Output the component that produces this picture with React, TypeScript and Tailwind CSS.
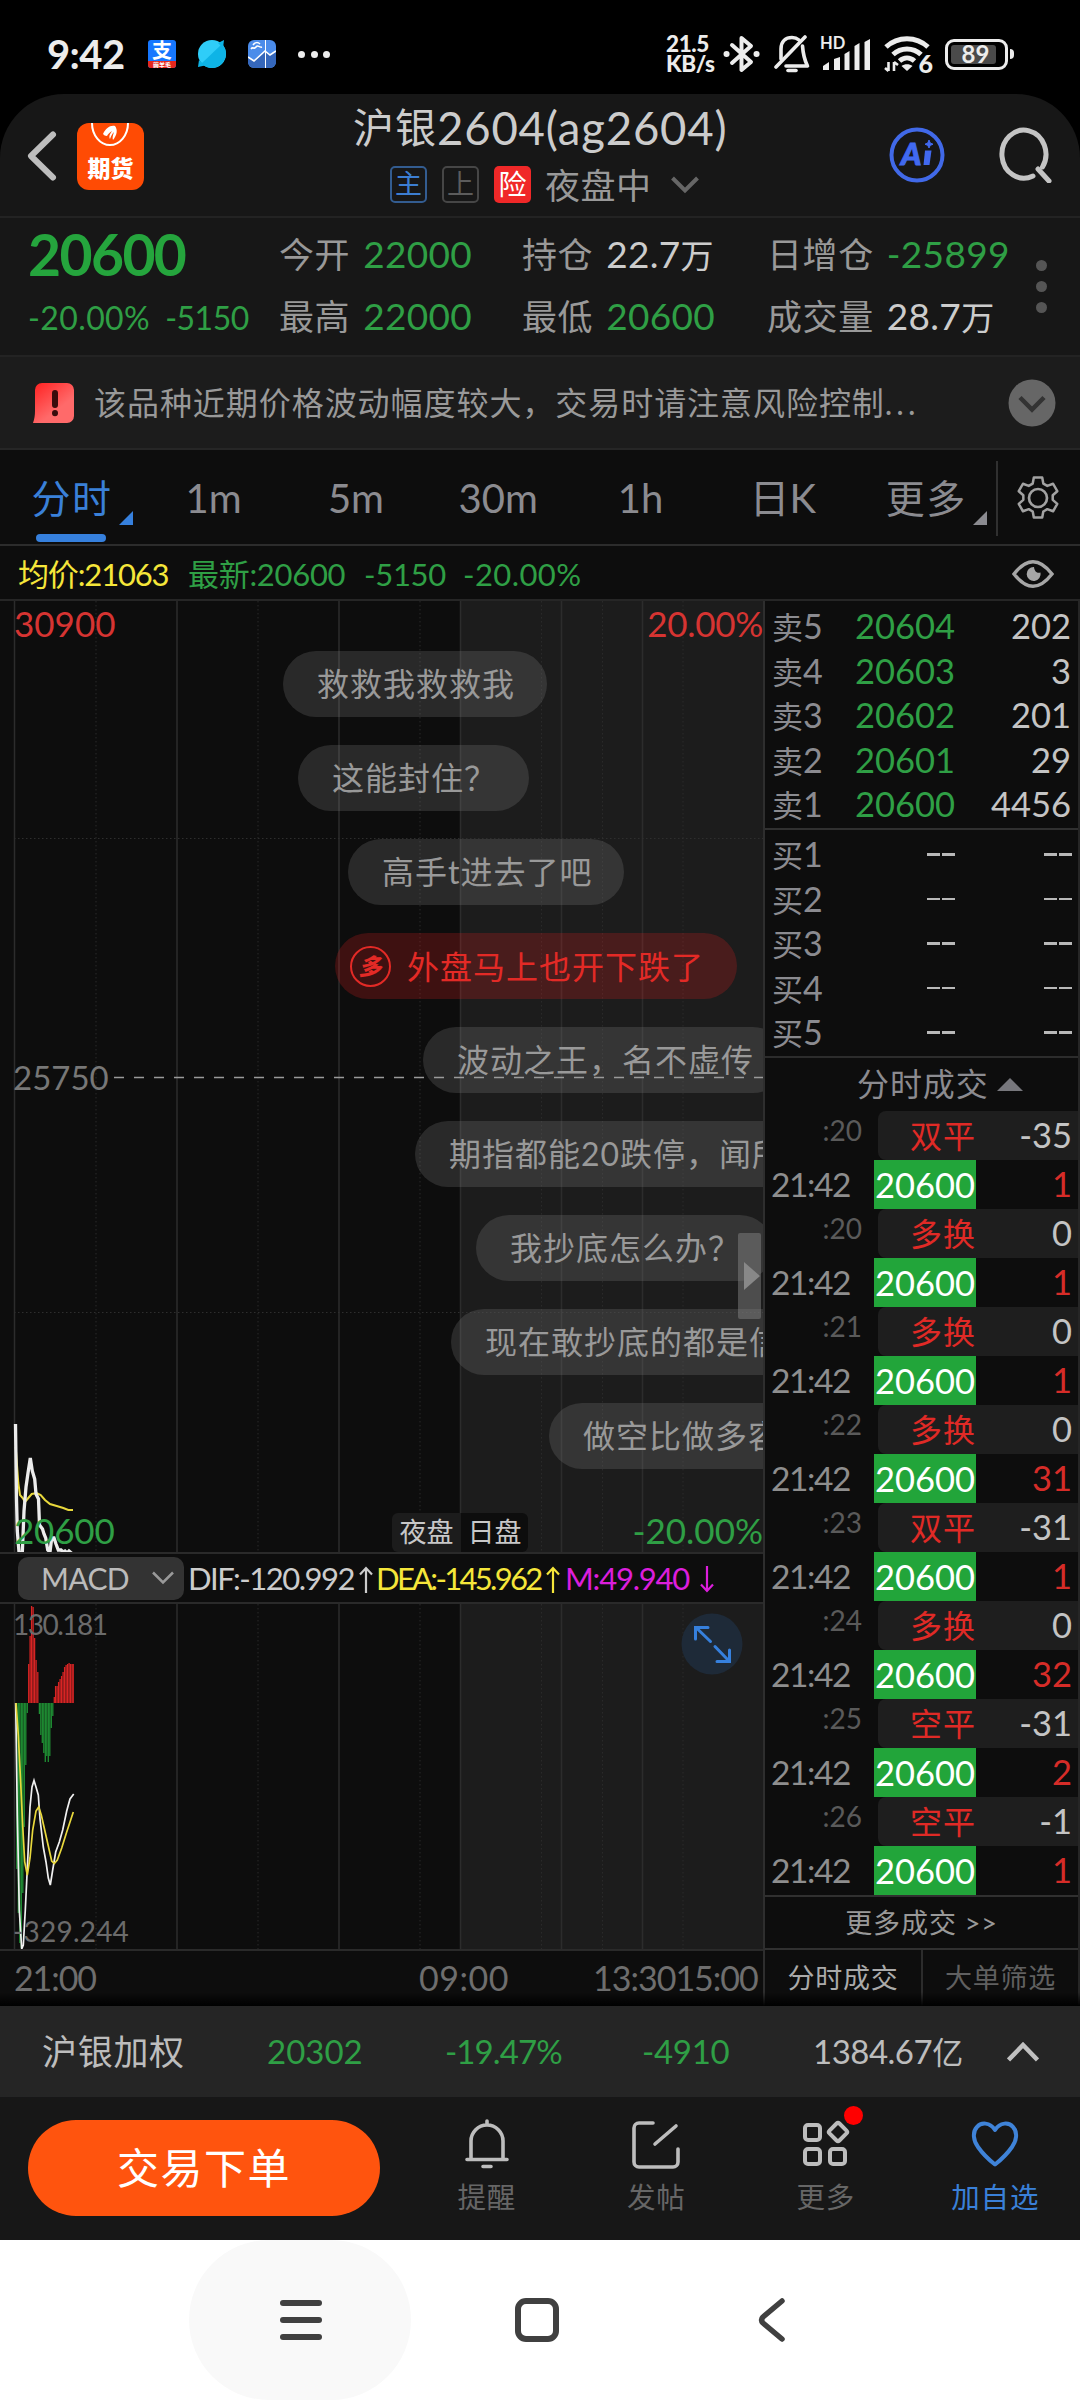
import React from "react";

const FONT = "font-['Lato','Noto_Sans_CJK_SC',sans-serif]";

/* ---------- status bar ---------- */
function StatusBar() {
  return (
    <div className="flex h-[94px] items-center bg-black pt-[14px] pl-[47px] text-[#ececec]">
      <span className="w-[101px] text-[40px] leading-[40px] font-bold tracking-[-0.6px]">9:42</span>
      <div className="flex h-7 w-7 flex-col overflow-hidden rounded-[3px] bg-[#1677ff]">
        <span className="h-[21px] text-center text-[20px] leading-[21px] font-bold text-white">支</span>
        <span className="h-[7px] bg-[#e5261c] text-center text-[6px] leading-[7px] font-bold text-white">薅羊毛</span>
      </div>
      <svg className="ml-[22px]" width="28" height="28" viewBox="0 0 28 28">
        <circle cx="14" cy="14" r="14" fill="#2fcdf8" />
        <path d="M3.5 23.5 24 4A14 14 0 0 1 3.5 23.5Z" fill="#0eb4e6" />
        <path d="M20 3 26 0 25 8ZM1 20 0 27 7 25.500Z" fill="#0eb4e6" />
      </svg>
      <svg className="ml-[22px]" width="28" height="28" viewBox="0 0 28 28">
        <rect width="28" height="28" rx="6" fill="#4b8cea" />
        <path d="M0 17 6 21 17 11 22 15 28 11V22a6 6 0 0 1-6 6H6a6 6 0 0 1-6-6Z" fill="#3567bb" />
        <path d="M0 17 6 21 17 11 22 15 28 11" fill="none" stroke="#fff" strokeWidth="1.600" />
        <path d="M17.500 0V28" stroke="#fff" strokeWidth="1" />
        <path d="M3 9c2-3 3 1 5-2s3 1 6 0M5 5c2-3 5-3 7-1" fill="none" stroke="#fff" strokeWidth="1.500" />
      </svg>
      <div className="ml-[22px] flex gap-[5.500px]">
        <i className="h-[7px] w-[7px] rounded-full bg-[#ececec]" />
        <i className="h-[7px] w-[7px] rounded-full bg-[#ececec]" />
        <i className="h-[7px] w-[7px] rounded-full bg-[#ececec]" />
      </div>
      <div className="ml-[336px] w-[57px] text-[22.500px] leading-[20px] font-black tracking-[-0.400px]">
        <div>21.5</div>
        <div>KB/s</div>
      </div>
      <svg width="38" height="40" viewBox="0 0 38 40" fill="none" stroke="#ececec" strokeWidth="4" strokeLinecap="round" strokeLinejoin="round">
        <path d="M9 11 28 28 18.500 36V4L28 12 9 29" />
        <path d="M3.500 20h.1M33.500 20h.1" strokeWidth="6" />
      </svg>
      <svg className="ml-[13px]" width="36" height="40" viewBox="0 0 36 40" fill="none" stroke="#ececec" strokeWidth="3.600" strokeLinecap="round" strokeLinejoin="round">
        <path d="M2 33 31 3" />
        <path d="M7 25V15C7 7 12 3.500 18 3.500c3 0 5 .8 7 2.500M28.500 12c.6 8 1.500 13 5 20H12" />
        <path d="M14 36.500h8" />
      </svg>
      <svg className="ml-[10px]" width="52" height="40" viewBox="0 0 52 40">
        <text x="0" y="15" fontSize="16.500" fontWeight="700" fill="#ececec">HD</text>
        <path d="M3 36v-4l6-4v8ZM14 36V25l6-2v13ZM24.500 36V20l5-3v19ZM34.500 36V12l5-3v27ZM44.500 36V8l5.500-3v31Z" fill="#ececec" />
      </svg>
      <svg className="ml-[12px]" width="50" height="42" viewBox="0 0 50 42" fill="none" stroke="#ececec" strokeWidth="5">
        <path d="M2 14c12-11 30-11 42 0M9 21.500c8-7.500 20-7.500 28 0" />
        <path d="M15.500 28c4.500-4 10.500-4 15 0" />
        <path d="M17.500 33 23 38l5.500-5c-3-2.500-8-2.500-11 0Z" fill="#ececec" stroke="none" />
        <path d="M4.500 29v9M4.500 38 1 35M10 38v-9M10 29l4 3" strokeWidth="2.600" />
        <text x="34.500" y="40" fontSize="25" fontWeight="900" fill="#ececec" stroke="none">6</text>
      </svg>
      <div className="ml-[11px] flex h-[31px] w-[63px] items-center rounded-[9px] border-[3px] border-[#ececec] p-[3px]">
        <span className="h-[19px] w-[45px] rounded-[3px] bg-[#4a4a4a] pl-[4px] text-center text-[24px] leading-[18px] font-bold">89</span>
      </div>
      <i className="ml-[2px] h-[10px] w-[4px] rounded-r-full bg-[#ececec]" />
    </div>
  );
}

/* ---------- title ---------- */
function Header() {
  return (
    <header className="flex h-[124px] rounded-t-[64px] border-b-2 border-[#232323] bg-[#171717]">
      <svg className="mt-[35px] ml-[26px]" width="32" height="54" viewBox="0 0 32 54" fill="none" stroke="#bdbdbd" strokeWidth="6" strokeLinecap="round" strokeLinejoin="round">
        <path d="M27 5.500 5 27 27 48.500" />
      </svg>
      <div className="relative mt-[29px] ml-[19px] h-[67px] w-[67px] overflow-hidden rounded-[12px] bg-[#ff4b04]">
        <svg className="absolute top-0 left-0" width="67" height="30" viewBox="0 0 67 30">
          <path d="M15 0a18 22 0 0 0 36 0" fill="none" stroke="#fff" strokeWidth="2" />
          <path d="M26 11c3-6 7-9 12-8 3 4 2 9-2 14-1-2 0-5 1-8-2 2-3 4-4 7-1-2-1-4 2-8-2 1-4 3-5 5-2 0-3-1-4-2Z" fill="#fff" />
        </svg>
        <span className="absolute top-[32px] left-[10.500px] text-[23px] leading-[26px] font-black text-white">期货</span>
      </div>
      <div className="ml-[209px] w-[373px]">
        <h1 className="mt-[9px] flex h-[50px] items-center text-[45.500px] leading-[48px] tracking-[0.800px] whitespace-nowrap text-[#cccccc]">
          <span className="text-[41px] tracking-[1px]">沪银</span>2604(ag2604)
        </h1>
        <div className="mt-[13px] ml-[37px] flex items-center">
          <span className="h-[37px] w-[37px] rounded-[5px] border-2 border-[#335c90] text-center text-[27px] leading-[32px] text-[#3c7ed2]">主</span>
          <span className="ml-[15px] h-[37px] w-[37px] rounded-[5px] border-2 border-[#464646] text-center text-[27px] leading-[32px] text-[#5c5c5c]">上</span>
          <span className="ml-[15px] h-[37px] w-[37px] rounded-[5px] bg-[#f02828] text-center text-[28px] leading-[36px] text-white">险</span>
          <span className="ml-[14px] text-[35px] leading-[36px] tracking-[0.500px] text-[#999]">夜盘中</span>
          <svg className="ml-[19px]" width="28" height="18" viewBox="0 0 28 18" fill="none" stroke="#666" strokeWidth="4">
            <path d="M1.500 2 14 14.500 26.500 2" />
          </svg>
        </div>
      </div>
      <svg className="mt-[33px] ml-[163px]" width="56" height="56" viewBox="0 0 56 56">
        <circle cx="28" cy="28" r="25.500" fill="none" stroke="#4169e8" strokeWidth="4" />
        <text x="12" y="38" fontSize="31" fontWeight="900" fontStyle="italic" fill="#4169f0" stroke="#4169f0">A</text>
        <path d="M36 23.500h6.500L40.500 38H34.500Z" fill="#4169f0" />
        <path d="m40 13 1.200 3 2.800 1.200-2.800 1.200L40 21l-1.200-2.600-2.800-1.200 2.800-1.200Z" fill="#4169f0" stroke="#4169f0" />
      </svg>
      <svg className="mt-[33px] ml-[51px]" width="56" height="56" viewBox="0 0 56 56" fill="none" stroke="#c4c4c4" strokeWidth="5" strokeLinecap="round">
        <path d="M37 49A22 24 0 1 1 46.500 40" />
        <path d="M42 42 53 54" />
      </svg>
    </header>
  );
}

function Quote({ label, value, color }: { label: string; value: string; color: string }) {
  return (
    <div className="flex h-[62px] items-center">
      <span className="text-[35px] tracking-[0.600px] text-[#999]">{label}</span>
      <span className={`-mt-[2px] ml-[13px] text-[37px] tracking-[0.300px] ${color}`}>
        {value.replace("万", "")}
        {value.endsWith("万") && <span className="text-[33px] tracking-normal">万</span>}
      </span>
    </div>
  );
}

const GREEN = "text-[#2f9f45]";

function PricePanel() {
  return (
    <section className="flex h-[139px] border-b-2 border-[#232323] bg-[#171717] leading-none whitespace-nowrap">
      <div className="ml-[28px] w-[251px]">
        <div className="mt-[7px] flex h-[58px] items-center text-[57px] font-bold tracking-[-1.600px] text-[#25a53d]">20600</div>
        <div className={`mt-[4px] flex h-[62px] items-center gap-[15px] text-[32px] tracking-[0.400px] ${GREEN}`}>
          <span>-20.00%</span>
          <span className="tracking-[-0.500px]">-5150</span>
        </div>
      </div>
      <div className="mt-[5px] w-[243px]">
        <Quote label="今开" value="22000" color={GREEN} />
        <Quote label="最高" value="22000" color={GREEN} />
      </div>
      <div className="mt-[5px] w-[245px]">
        <Quote label="持仓" value="22.7万" color="text-[#ccc]" />
        <Quote label="最低" value="20600" color={GREEN} />
      </div>
      <div className="mt-[5px] w-[269px]">
        <Quote label="日增仓" value="-25899" color={GREEN} />
        <Quote label="成交量" value="28.7万" color="text-[#ccc]" />
      </div>
      <div className="mt-[42px] flex flex-col gap-[10px]">
        <i className="h-[11px] w-[11px] rounded-full bg-[#555]" />
        <i className="h-[11px] w-[11px] rounded-full bg-[#555]" />
        <i className="h-[11px] w-[11px] rounded-full bg-[#555]" />
      </div>
    </section>
  );
}

function Notice() {
  return (
    <div className="flex h-[93px] items-center border-b-2 border-[#262626] bg-[#1c1c1c]">
      <svg className="ml-[33px]" width="41" height="40" viewBox="0 0 41 40">
        <defs>
          <linearGradient id="warn" x1="0" y1="0" x2="0.800" y2="1">
            <stop offset="0" stopColor="#ff2020" />
            <stop offset="0.700" stopColor="#ff6a6a" />
          </linearGradient>
        </defs>
        <path d="M2 7a7 7 0 0 1 7-7h25a7 7 0 0 1 7 7v26a7 7 0 0 1-7 7H0c1.500-4 2-8 2-12Z" fill="url(#warn)" />
        <path d="M22 10v12M22 30v.2" stroke="#3a0c0c" strokeWidth="6" strokeLinecap="round" />
      </svg>
      <span className="ml-[20px] w-[914px] text-[32px] tracking-[0.950px] whitespace-nowrap text-[#999]">
        该品种近期价格波动幅度较大，交易时请注意风险控制<span className="tracking-[4px]">...</span>
      </span>
      <svg width="48" height="48" viewBox="0 0 48 48">
        <circle cx="24" cy="24" r="23.500" fill="#666" />
        <path d="M12 18.500 24 30.500 36 18.500" fill="none" stroke="#333" strokeWidth="4.500" />
      </svg>
    </div>
  );
}

function Corner({ color }: { color: string }) {
  return (
    <svg className="absolute right-[9px] bottom-[19px]" width="14" height="14" viewBox="0 0 14 14">
      <path d="M14 0V14H0Z" fill={color} />
    </svg>
  );
}

function PeriodTabs() {
  const tabs = ["1m", "5m", "30m", "1h", "日K"];
  return (
    <nav className="flex h-[96px] border-b-2 border-[#2c2c2c] bg-[#0d0d0d] text-[40px] leading-[97px] text-[#8b8b90]">
      <div className="relative w-[142px] pl-[2px] text-center text-[39px] tracking-[1.500px] text-[#3a80d8]">
        分时
        <Corner color="#3680dd" />
        <i className="absolute bottom-[2px] left-[36px] h-[8px] w-[70px] rounded-full bg-[#3680dd]" />
      </div>
      {tabs.map((t) => (
        <div key={t} className="w-[142.300px] pl-[1px] text-center">{t}</div>
      ))}
      <div className="relative w-[142.500px] pl-[3px] text-center text-[39px] tracking-[1.500px]">
        更多
        <Corner color="#8b8b90" />
      </div>
      <i className="mt-[11px] h-[75px] w-[2px] bg-[#303030]" />
      <svg className="mt-[24px] ml-[16px]" width="48" height="48" viewBox="0 0 48 48" fill="none" stroke="#a2a2a2" strokeWidth="2.700" strokeLinejoin="round">
        <path d="M19.500 2.500h9l1.200 6.500 4.300 2.500 6.200-2.300 4.500 8-4.900 4.300v5l4.900 4.300-4.500 8-6.200-2.300-4.300 2.500-1.200 6.500h-9L18.300 39 14 36.500l-6.200 2.300-4.500-8 4.900-4.300v-5l-4.900-4.300 4.500-8L14 11.500 18.300 9Z" transform="translate(1.700 1.200) scale(.93)" />
        <circle cx="24" cy="24" r="9" />
      </svg>
    </nav>
  );
}

function InfoRow() {
  return (
    <div className="flex h-[55px] items-center border-b-2 border-[#262626] bg-[#0d0d0d] pt-[3px] pl-[18px] text-[31px] leading-none whitespace-nowrap text-[#2f9f45]">
      <span className="w-[170px] tracking-[-1.150px] text-[#f5e63a]">均价:21063</span>
      <span className="w-[176px] tracking-[-0.300px]">最新:20600</span>
      <span className="w-[99px] tracking-[-0.300px]">-5150</span>
      <span className="w-[549px] tracking-[0.400px]">-20.00%</span>
      <svg width="42" height="28" viewBox="0 0 42 28">
        <path d="M2 14Q21-10.500 40 14 21 38.500 2 14Z" fill="none" stroke="#a6a6a6" strokeWidth="3.500" />
        <path d="M22 7a7 7 0 1 0 6.500 5.500c-3 1-6-.5-6.500-5.500Z" fill="#a6a6a6" />
      </svg>
    </div>
  );
}

/* ---------- charts ---------- */
type P = [number, number][];
const line = (pts: P) => pts.map(([x, y]) => `${x},${y}`).join(" ");

const price: P = [
  [15.5, 823], [16.500, 898], [17.300, 930], [19, 951], [22.300, 952], [24, 910], [26, 886], [28, 872], [30.300, 857], [32.300, 870],
  [34.700, 878], [36, 893], [38.500, 898], [39.500, 924], [42.500, 928], [44, 933], [45.700, 937], [47.700, 949], [50, 951],
  [51.700, 937], [54, 937], [56, 943], [58.300, 949], [61, 949], [63, 951], [65, 950], [67, 952], [69, 950], [72.500, 953],
];
const average: P = [
  [15.700, 846], [18.300, 882], [20, 894], [22.700, 897], [25, 901], [28.300, 897], [31.700, 893], [36.700, 892], [40.700, 894],
  [45, 899], [50, 903], [56.700, 905], [63.300, 907], [68.300, 909], [73, 909],
];
const dif: P = [
  [15.700, 100], [17.300, 212], [19.300, 307], [21.700, 346], [23.300, 342], [25.300, 307], [28, 251], [30, 204], [32, 184], [34, 177.500],
  [36, 184], [38.300, 192], [40, 216], [43.300, 244], [46, 259], [48.300, 275], [50.300, 282], [52.700, 267], [55.700, 249],
  [59.300, 239], [62.700, 227], [66.700, 208], [70, 196], [73.700, 191],
];
const dea: P = [
  [16, 100], [18.300, 132], [20.700, 180], [22.700, 223], [24.700, 259], [27.300, 272], [30, 255], [32.700, 227], [36, 208], [38.700, 204],
  [41.300, 212], [44.700, 227], [48.300, 243], [51.700, 258], [54.300, 260.500], [57.300, 257], [61.700, 245], [66.700, 229], [73.300, 209],
];
const bars: P = [
  [17, 266], [18.500, 310], [20, 340], [21.500, 345], [23, 290], [24.500, 224], [26, 162], [27.500, 110],
  [28.900, 61], [30.300, 33], [31.800, 3], [33.300, 4], [34.800, 35], [36.300, 57], [38, 69],
  [39.600, 111], [41, 132], [42.500, 140], [44, 150], [45.500, 159], [47, 153], [48.500, 159], [50, 153], [51.500, 125], [53, 113],
  [54.500, 94], [55.800, 83], [57.300, 83], [58.800, 79], [60.300, 76], [61.800, 73], [63.300, 69], [64.800, 64], [66.300, 62], [67.800, 61], [69.300, 60], [70.800, 61], [72.300, 61], [73.400, 61],
];

function VerticalGrid({ height }: { height: number }) {
  return (
    <>
      <rect x="461" width="302" height={height} fill="#1c1c1c" />
      {[96, 258, 420, 541.5, 602.5, 683].map((x) => (
        <line key={x} x1={x} x2={x} y2={height} stroke="#2a2a2a" strokeDasharray="1.500 2.500" />
      ))}
      {[14.5, 177, 339, 460.5, 561.5, 642.5].map((x) => (
        <line key={x} x1={x} x2={x} y2={height} stroke="#2c2c2c" strokeWidth="1.500" />
      ))}
    </>
  );
}

function Pill({ at, text }: { at: string; text: string }) {
  return (
    <div className={`absolute h-[66px] rounded-full bg-[#808080]/25 pr-[32px] pl-[34px] text-[32px] leading-[65px] tracking-[1px] whitespace-nowrap text-[#999] ${at}`}>
      {text}
    </div>
  );
}

function PriceChart() {
  return (
    <div className="relative h-[953px] overflow-hidden border-b-2 border-[#2a2a2a]">
      <svg className="absolute top-0 left-0" width="764" height="953" viewBox="0 0 764 953">
        <VerticalGrid height={953} />
        <path d="M14 237.500H764M14 711.500H764" stroke="#2e2e2e" strokeDasharray="1.500 2.500" />
        <polyline points={line(average)} fill="none" stroke="#e8d83c" strokeWidth="2" />
        <polyline points={line(price)} fill="none" stroke="#ececec" strokeWidth="3.300" />
      </svg>
      <span className="absolute top-[3px] left-[14px] text-[35px] leading-[38px] text-[#d63432]">30900</span>
      <span className="absolute top-[3px] right-0 text-[35px] leading-[38px] tracking-[-0.300px] text-[#d63432]">20.00%</span>
      <span className="absolute top-[457px] left-[13px] text-[33px] leading-[38px] text-[#777]">25750</span>
      <span className="absolute top-[910px] left-[14px] text-[35px] leading-[38px] tracking-[-0.200px] text-[#2f9f45]">20600</span>
      <span className="absolute top-[910px] right-0 text-[35px] leading-[38px] text-[#2f9f45]">-20.00%</span>
      <div className="absolute bottom-0 left-[392px] flex text-[27px] leading-[38px] text-[#c8c8c8]">
        <span className="h-[39px] w-[69px] rounded-l-[6px] bg-[#1c1c1c] text-center">夜盘</span>
        <span className="h-[39px] w-[67px] rounded-r-[6px] bg-[#0d0d0d] text-center">日盘</span>
      </div>
      <Pill at="top-[50px] left-[283px]" text="救救我救救我" />
      <Pill at="top-[144px] left-[298px]" text="这能封住？" />
      <Pill at="top-[238px] left-[348px]" text="高手t进去了吧" />
      <div className="absolute top-[332px] left-[335px] flex h-[66px] w-[402px] items-center rounded-full bg-[#ec2020]/22 pl-[15px] text-[32px] leading-[65px] tracking-[1px] whitespace-nowrap text-[#e32a26]">
        <span className="mr-[16px] flex h-[41px] w-[41px] items-center justify-center rounded-full border-2 border-[#e32a26] text-[23px] font-black italic">多</span>
        外盘马上也开下跌了
      </div>
      <Pill at="top-[426px] left-[423px]" text="波动之王，名不虚传" />
      <Pill at="top-[520px] left-[415px]" text="期指都能20跌停，闻所未闻" />
      <Pill at="top-[614px] left-[476px]" text="我抄底怎么办？" />
      <Pill at="top-[708px] left-[451px]" text="现在敢抄底的都是信仰" />
      <Pill at="top-[802px] left-[549px]" text="做空比做多容易" />
      <svg className="absolute top-[475px] left-[113px]" width="651" height="3" viewBox="0 0 651 3">
        <path d="M1 1.500H651" stroke="#9a9a9a" strokeWidth="1.500" strokeDasharray="10 10" />
      </svg>
      <div className="absolute top-[632px] left-[738px] flex h-[86px] w-[23px] items-center justify-end rounded-[2px] bg-[#8a8a8a]/45">
        <svg width="18" height="30" viewBox="0 0 18 30">
          <path d="M1 1 17 15 1 29Z" fill="#888" />
        </svg>
      </div>
    </div>
  );
}

function Arrow({ color, down }: { color: string; down?: boolean }) {
  return (
    <svg className={down ? "ml-[11px] inline rotate-180 align-[-3px]" : "ml-[5px] inline align-[-3px]"} width="14" height="27" viewBox="0 0 14 27" fill="none" stroke={color} strokeWidth="2.200">
      <path d="M7 27V2M1 8.500 7 2 13 8.500" />
    </svg>
  );
}

function IndicatorRow() {
  return (
    <div className="flex h-[48px] items-center pl-[18px] text-[31px] leading-none whitespace-nowrap">
      <div className="mr-[4px] flex h-[43px] w-[166px] items-center rounded-[10px] bg-[#333] pl-[23px] text-[30px] tracking-[-0.600px] text-[#bbb]">
        <span className="w-[111px]">MACD</span>
        <svg width="22" height="14" viewBox="0 0 22 14" fill="none" stroke="#999" strokeWidth="2.500">
          <path d="M1 1.500 11 11.500 21 1.500" />
        </svg>
      </div>
      <span className="w-[188px] tracking-[-1.500px] text-[#ccc]">DIF:-120.992<Arrow color="#ccc" /></span>
      <span className="w-[189px] tracking-[-2.700px] text-[#f5e63a]">DEA:-145.962<Arrow color="#f5e63a" /></span>
      <span className="tracking-[-1.200px] text-[#dc1edc]">M:49.940<Arrow color="#dc1edc" down /></span>
    </div>
  );
}

function MacdChart() {
  return (
    <div className="relative h-[349px] border-y-2 border-[#2a2a2a]">
      <svg className="absolute top-0 left-0" width="764" height="345" viewBox="0 0 764 345">
        <VerticalGrid height={345} />
        <g transform="translate(0 -1)">
          {bars.map(([x, y]) => (
            <rect
              key={x}
              x={x - 0.85}
              width="1.300"
              y={Math.min(y, 100)}
              height={Math.abs(y - 100)}
              fill={y < 100 ? "#d82424" : "#1f8f34"}
            />
          ))}
          <polyline points={line(dif)} fill="none" stroke="#f0f0f0" strokeWidth="1.700" />
          <polyline points={line(dea)} fill="none" stroke="#e8d83c" strokeWidth="1.700" />
        </g>
      </svg>
      <span className="absolute top-[4px] left-[13px] text-[28px] leading-[32px] tracking-[-1.500px] text-[#6b6b6b]">130.181</span>
      <span className="absolute bottom-[2px] left-[13px] text-[28px] leading-[32px] tracking-[0.200px] text-[#6b6b6b]">-329.244</span>
      <svg className="absolute top-[9px] left-[681px]" width="62" height="62" viewBox="0 0 62 62" fill="none" stroke="#3680dd" strokeWidth="3" strokeLinecap="round">
        <circle cx="31" cy="31" r="30.500" fill="#1e2a38" stroke="none" />
        <path d="M29.500 28.500 15 14.500M14.500 26V14.500H27M34 33.500 48 48M48.500 37V48.500H36" />
      </svg>
    </div>
  );
}

function ChartColumn() {
  return (
    <div className="w-[765px] border-r-2 border-[#2e2e2e]">
      <PriceChart />
      <IndicatorRow />
      <MacdChart />
      <div className="flex h-[54px] items-center pl-[14px] text-[34px] leading-none text-[#6e6e6e]">
        <span className="w-[405px] tracking-[-1.100px]">21:00</span>
        <span className="w-[174px] tracking-[0.500px]">09:00</span>
        <span className="tracking-[-1px]">13:3015:00</span>
      </div>
    </div>
  );
}

/* ---------- order book & trades ---------- */
const sells = [["卖5", "20604", "202"], ["卖4", "20603", "3"], ["卖3", "20602", "201"], ["卖2", "20601", "29"], ["卖1", "20600", "4456"]];
const trades = [
  [":20", "双平", "-35", "1"], [":20", "多换", "0", "1"], [":21", "多换", "0", "1"], [":22", "多换", "0", "31"],
  [":23", "双平", "-31", "1"], [":24", "多换", "0", "32"], [":25", "空平", "-31", "2"], [":26", "空平", "-1", "1"],
];

function Dashes() {
  return (
    <span className="flex justify-end gap-[2px]">
      <i className="h-[2.500px] w-[13px] bg-[#b8b8b8]" />
      <i className="h-[2.500px] w-[13px] bg-[#b8b8b8]" />
    </span>
  );
}

function OrderColumn() {
  return (
    <div className="w-[315px] border-r-2 border-[#262626] leading-none">
      <div className="h-[229px] border-b-2 border-[#303030] pt-[3px]">
        {sells.map(([l, p, n]) => (
          <div key={l} className="flex h-[44.500px] items-center pr-[7px] pl-[7px] text-[34.500px]">
            <span className="w-[60px] text-[31px] text-[#8b8b90]">{l[0]}<span className="text-[34px]">{l[1]}</span></span>
            <span className="w-[123px] text-right text-[#2f9f45]">{p}</span>
            <span className="flex-1 text-right text-[#c4c4c4]">{n}</span>
          </div>
        ))}
      </div>
      <div className="h-[228px] border-b-2 border-[#2c2c2c] pt-[2px]">
        {["1", "2", "3", "4", "5"].map((n) => (
          <div key={n} className="flex h-[44.500px] items-center pr-[6px] pl-[7px]">
            <span className="w-[60px] text-[31px] text-[#8b8b90]">买<span className="text-[34px]">{n}</span></span>
            <span className="w-[123px]"><Dashes /></span>
            <span className="flex-1"><Dashes /></span>
          </div>
        ))}
      </div>
      <div className="flex h-[53px] items-center pl-[92px] text-[32px] tracking-[0.900px] text-[#8b8b90]">
        <span className="-mt-[1px]">分时成交</span>
        <svg className="ml-[8px]" width="26" height="13" viewBox="0 0 28 14">
          <path d="M14 0 28 14H0Z" fill="#77777c" />
        </svg>
      </div>
      {trades.map(([s, kind, delta, n]) => (
        <div key={s + n + kind + delta}>
          <div className="flex h-[49px]">
            <span className="w-[97px] pt-[5px] text-right text-[28px] text-[#5a5a5a]">{s}</span>
            <div className="ml-[16px] flex flex-1 items-center justify-between rounded-l-[8px] bg-[#1e1e1e] pr-[6px] pl-[32px]">
              <span className="text-[32px] tracking-[1px] text-[#e02a26]">{kind}</span>
              <span className="-mt-[1px] text-[34.500px] text-[#c4c4c4]">{delta}</span>
            </div>
          </div>
          <div className="flex h-[49px] items-center pr-[6px] pl-[6px] text-[34.500px]">
            <span className="w-[103px] text-[33.500px] tracking-[-1.400px] text-[#8e8e8e]">21:42</span>
            <span className="h-[49px] w-[102px] bg-[#22a53a] text-center leading-[49px] text-white">20600</span>
            <span className="flex-1 text-right text-[#d62c28]">{n}</span>
          </div>
        </div>
      ))}
      <div className="flex h-[55px] items-center justify-center border-y-2 border-[#303030] text-[27px] tracking-[0.900px] text-[#999]">更多成交 &gt;&gt;</div>
      <div className="flex h-[56px] text-[27px] leading-[55px] tracking-[0.700px]">
        <span className="w-[158px] border-r-2 border-[#2c2c2c] text-center text-[#aaa]">分时成交</span>
        <span className="flex-1 text-center text-[#606060]">大单筛选</span>
      </div>
    </div>
  );
}

/* ---------- bottom ---------- */
function IndexBar() {
  return (
    <div className="flex h-[91px] items-center bg-[#252525] pl-[42px] text-[33px] leading-none whitespace-nowrap text-[#2f9f45]">
      <span className="w-[225px] text-[35px] tracking-[0.700px] text-[#bdbdbd]">沪银加权</span>
      <span className="w-[178px]">20302</span>
      <span className="w-[197px] tracking-[-0.900px]">-19.47%</span>
      <span className="w-[171px] tracking-[-0.300px]">-4910</span>
      <span className="w-[194px] tracking-[-0.500px] text-[#bdbdbd]">1384.67<span className="text-[31px]">亿</span></span>
      <svg width="32" height="20" viewBox="0 0 32 20" fill="none" stroke="#c0c0c0" strokeWidth="4.500">
        <path d="M1.500 18 16 3 30.500 18" />
      </svg>
    </div>
  );
}

function Tool({ label, color, badge, children }: { label: string; color: string; badge?: boolean; children: React.ReactNode }) {
  return (
    <div className={`relative flex w-[169.500px] flex-col items-center ${color}`}>
      <svg className="mt-[19px]" width="56" height="56" viewBox="0 0 56 56" fill="none" strokeWidth="3.600" strokeLinecap="round" strokeLinejoin="round">
        {children}
      </svg>
      {badge && <i className="absolute top-[9px] left-[103px] h-[19px] w-[19px] rounded-full bg-[#f00]" />}
      <span className="mt-[8px] text-[28.500px] leading-[34px] tracking-[0.800px]">{label}</span>
    </div>
  );
}

function Toolbar() {
  return (
    <div className="flex h-[143px] bg-[#171717] pl-[28px]">
      <button className="mt-[23px] mr-[22px] h-[96px] w-[352px] rounded-full bg-[#ff540e] text-[42px] leading-[92px] tracking-[1.500px] text-white">交易下单</button>
      <Tool label="提醒" color="text-[#666]">
        <path d="M28 5v4M12 43V25a16 16 0 0 1 32 0V43M8 43.500H48M24 50.500h8" stroke="#bdbdbd" />
      </Tool>
      <Tool label="发帖" color="text-[#666]">
        <path d="M25 7H11a5 5 0 0 0-5 5V46a5 5 0 0 0 5 5H45a5 5 0 0 0 5-5V33M48 10 27 28" stroke="#bdbdbd" />
      </Tool>
      <Tool label="更多" color="text-[#666]" badge>
        <g stroke="#bdbdbd" strokeWidth="4">
          <rect x="7" y="9" width="15" height="15" rx="3" />
          <rect x="7" y="33" width="15" height="15" rx="3" />
          <rect x="32" y="33" width="15" height="15" rx="3" />
          <rect x="33" y="9" width="14" height="14" rx="2" transform="rotate(45 40 16)" />
        </g>
      </Tool>
      <Tool label="加自选" color="text-[#3a80d8]">
        <path d="M28 14C23 6 14 6 10 11 5 16 6.500 25 11 31 15.500 37.500 21 43 28 48.500 35 43 40.500 37.500 45 31 49.500 25 51 16 46 11 42 6 33 6 28 14Z" stroke="#3f83d8" strokeWidth="4" />
      </Tool>
    </div>
  );
}

function NavBar() {
  return (
    <div className="flex h-[160px] items-center bg-white">
      <div className="ml-[189px] flex h-[160px] w-[222px] items-center justify-center rounded-[80px] bg-[#f9f9f9]">
        <div className="ml-[2px] flex flex-col gap-[11px]">
          <i className="h-[6px] w-[42px] rounded-full bg-[#404040]" />
          <i className="h-[6px] w-[42px] rounded-full bg-[#404040]" />
          <i className="h-[6px] w-[42px] rounded-full bg-[#404040]" />
        </div>
      </div>
      <i className="ml-[104px] h-[44px] w-[44px] rounded-[11px] border-[6px] border-[#404040]" />
      <svg className="ml-[197px]" width="32" height="46" viewBox="0 0 32 46" fill="none" stroke="#404040" strokeWidth="5.500" strokeLinecap="round" strokeLinejoin="round">
        <path d="M26 4 7 20Q4 23 7 26L26 42" />
      </svg>
    </div>
  );
}

export default function App() {
  return (
    <div className={`h-[2400px] w-[1080px] overflow-hidden bg-black ${FONT}`}>
      <StatusBar />
      <Header />
      <PricePanel />
      <Notice />
      <PeriodTabs />
      <InfoRow />
      <main className="relative flex h-[1405px] overflow-hidden bg-[#0d0d0d]">
        <ChartColumn />
        <OrderColumn />
        <div className="absolute bottom-0 left-0 h-[14px] w-full bg-gradient-to-b from-transparent to-black" />
      </main>
      <IndexBar />
      <Toolbar />
      <NavBar />
    </div>
  );
}
